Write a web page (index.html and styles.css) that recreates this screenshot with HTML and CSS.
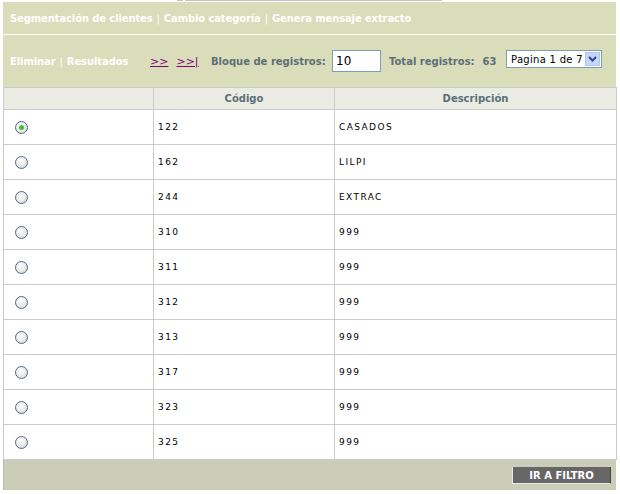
FILE: index.html
```html
<!DOCTYPE html>
<html lang="es">
<head>
<meta charset="utf-8">
<title>Segmentación de clientes</title>
<link rel="stylesheet" href="styles.css">
</head>
<body>
<div class="page">
  <div class="topline"><span class="tl-a"></span><span class="tl-b"></span></div>
  <div class="nav">
    <a class="navlink" href="#">Segmentación de clientes</a><span class="sep">|</span><a class="navlink" href="#">Cambio categoría</a><span class="sep">|</span><a class="navlink" href="#">Genera mensaje extracto</a>
  </div>
  <div class="toolbar">
    <div class="actions">
      <a class="navlink" href="#">Eliminar</a><span class="sep">|</span><a class="navlink" href="#">Resultados</a>
    </div>
    <div class="pager">
      <a class="plink" href="#">&gt;&gt;</a>
      <a class="plink" href="#">&gt;&gt;|</a>
    </div>
    <label class="lbl block-lbl">Bloque de registros:</label>
    <input class="block-input" type="text" value="10">
    <span class="lbl total">Total registros:<span class="num">63</span></span>
    <div class="select">
      <span class="select-text">Pagina 1 de 7</span>
      <span class="select-btn"><svg width="9" height="6" viewBox="0 0 9 6"><path d="M1 1 L4.5 4.5 L8 1" fill="none" stroke="#2c4a86" stroke-width="2"/></svg></span>
    </div>
  </div>
  <table class="grid">
    <colgroup><col class="w1"><col class="w2"><col class="w3"></colgroup>
    <thead>
      <tr><th></th><th>Código</th><th>Descripción</th></tr>
    </thead>
    <tbody>
      <tr><td class="c1"><span class="radio checked"></span></td><td>122</td><td>CASADOS</td></tr>
      <tr><td class="c1"><span class="radio"></span></td><td>162</td><td>LILPI</td></tr>
      <tr><td class="c1"><span class="radio"></span></td><td>244</td><td>EXTRAC</td></tr>
      <tr><td class="c1"><span class="radio"></span></td><td>310</td><td>999</td></tr>
      <tr><td class="c1"><span class="radio"></span></td><td>311</td><td>999</td></tr>
      <tr><td class="c1"><span class="radio"></span></td><td>312</td><td>999</td></tr>
      <tr><td class="c1"><span class="radio"></span></td><td>313</td><td>999</td></tr>
      <tr><td class="c1"><span class="radio"></span></td><td>317</td><td>999</td></tr>
      <tr><td class="c1"><span class="radio"></span></td><td>323</td><td>999</td></tr>
      <tr><td class="c1"><span class="radio"></span></td><td>325</td><td>999</td></tr>
    </tbody>
  </table>
  <div class="footer">
    <button class="btn" type="button">IR A FILTRO</button>
  </div>
</div>
</body>
</html>
```
FILE: styles.css
```css
html, body {
  margin: 0;
  padding: 0;
  background: #ffffff;
}
body {
  font-family: "DejaVu Sans", Verdana, sans-serif;
}
.page {
  width: 613px;
  margin-left: 3px;
}
.topline {
  height: 2px;
  display: flex;
}
.tl-a {
  margin-left: 174px;
  width: 6px;
  height: 1px;
  background: #c4c4c4;
}
.tl-b {
  margin-left: 2px;
  width: 257px;
  height: 1px;
  background: #c4c4c4;
}
.nav {
  height: 32px;
  background: #d9ddba;
  display: flex;
  align-items: center;
  padding-left: 7px;
  border-bottom: 1px solid #ffffff;
  font-size: 10px;
  font-weight: bold;
  color: #ffffff;
  letter-spacing: -0.12px;
}
.navlink {
  color: #ffffff;
  text-decoration: none;
  font-weight: bold;
}
.sep {
  margin: 0 4px;
  color: #ffffff;
  font-weight: normal;
}
.toolbar {
  height: 52px;
  background: #d9ddba;
  display: flex;
  align-items: center;
  padding-left: 7px;
  font-size: 10px;
  font-weight: bold;
}
.actions {
  width: 140px;
  flex: none;
  display: flex;
  align-items: center;
  letter-spacing: -0.1px;
}
.pager {
  display: flex;
  gap: 8px;
  width: 61px;
  flex: none;
  font-family: "DejaVu Sans", sans-serif;
  font-weight: normal;
  font-size: 11px;
  margin-top: 1px;
}
.plink {
  color: #800080;
  text-decoration: underline;
}
.lbl {
  color: #5b6f79;
  font-weight: bold;
  font-size: 10px;
  white-space: nowrap;
}
.block-lbl {
  width: 121px;
  flex: none;
}
.block-input {
  width: 49px;
  height: 22px;
  flex: none;
  padding: 0 3px;
  border: 1px solid #7f9db9;
  font-family: "DejaVu Sans", sans-serif;
  font-size: 12px;
  color: #000000;
  box-sizing: border-box;
}
.total {
  margin-left: 8px;
  width: 117px;
  flex: none;
}
.num {
  margin-left: 8px;
}
.select {
  width: 96px;
  height: 18px;
  flex: none;
  border: 1px solid #7f9db9;
  box-sizing: border-box;
  background: #ffffff;
  display: flex;
  align-items: center;
  margin-top: -4px;
}
.select-text {
  flex: 1;
  padding-left: 4px;
  font-family: "DejaVu Sans", sans-serif;
  font-size: 10px;
  font-weight: normal;
  color: #000000;
  letter-spacing: 0.3px;
  white-space: nowrap;
}
.select-btn {
  width: 15px;
  height: 14px;
  margin-right: 1px;
  background: #c5d5fb;
  border: 1px solid #b3c6ef;
  box-sizing: border-box;
  display: flex;
  align-items: center;
  justify-content: center;
}
.grid {
  width: 613px;
  table-layout: fixed;
  border-collapse: collapse;
  border: 1px solid #cbcbcb;
}
.w1 { width: 150px; }
.w2 { width: 181px; }
.w3 { width: 282px; }
.grid th, .grid td {
  border: 1px solid #cbcbcb;
  padding: 0 0 0 4px;
}
.grid th {
  height: 21px;
  background: #eaece3;
  color: #5b6f79;
  font-size: 10px;
  font-weight: bold;
  text-align: center;
  padding: 0;
}
.grid td {
  height: 34px;
  font-size: 9px;
  color: #000000;
  letter-spacing: 1.4px;
  background: #ffffff;
}
.grid .c1 {
  padding-left: 11px;
}
.radio {
  display: block;
  width: 11px;
  height: 11px;
  border-radius: 50%;
  border: 1px solid #4c6c95;
  background: radial-gradient(circle at 40% 35%, #ffffff 0%, #e9e9e4 55%, #c8cbc4 100%);
  position: relative;
}
.radio.checked::after {
  content: "";
  position: absolute;
  left: 3px;
  top: 3px;
  width: 5px;
  height: 5px;
  border-radius: 50%;
  background: #3ec13e;
}
.footer {
  height: 30px;
  background: #cbcdb8;
  border-left: 1px solid #b9bbb0;
  display: flex;
  align-items: center;
  justify-content: flex-end;
  padding-right: 5px;
  box-sizing: border-box;
}
.btn {
  width: 99px;
  height: 17px;
  background: #666666;
  color: #ffffff;
  font-family: "DejaVu Sans", sans-serif;
  font-size: 10px;
  font-weight: bold;
  border: none;
  border-left: 1px solid #e8e8e8;
  border-bottom: 1px solid #e8e8e8;
  border-right: 1px solid #444;
  padding: 0;
  margin-top: 1px;
}
```
